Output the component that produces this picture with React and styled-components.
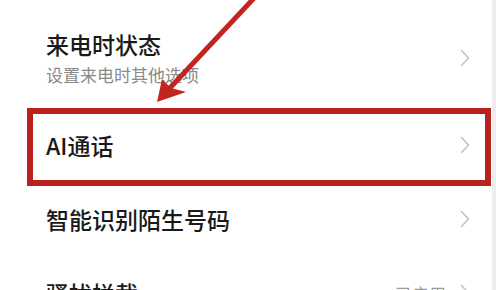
import React from 'react';
import styled, { createGlobalStyle } from 'styled-components';

const GlobalStyle = createGlobalStyle`
  html, body {
    margin: 0;
    padding: 0;
    background: #ffffff;
  }
  body {
    font-family: "Noto Sans CJK SC", "Noto Sans", sans-serif;
    -webkit-font-smoothing: antialiased;
  }
`;

const items = [
  { id: 'status', title: '来电时状态', desc: '设置来电时其他选项' },
  { id: 'ai', title: 'AI通话', highlight: true },
  { id: 'stranger', title: '智能识别陌生号码' },
  { id: 'block', title: '骚扰拦截', value: '已启用' },
];

const Chevron = () => (
  <svg width="10" height="18" viewBox="0 0 10 18" fill="none">
    <path d="M1.5 1.5 L8.5 9 L1.5 16.5" stroke="#c2c2c2" strokeWidth="1.6" strokeLinecap="round" strokeLinejoin="round" />
  </svg>
);

const App = () => {
  return (
    <>
      <GlobalStyle />
      <Screen>
        <List>
          {items.map(item => (
            <Row key={item.id} tall={!!item.desc} highlight={item.highlight}>
              <TextBlock>
                <Title>{item.title}</Title>
                {item.desc && <Desc>{item.desc}</Desc>}
              </TextBlock>
              <Trailing>
                {item.value && <Value>{item.value}</Value>}
                <Chevron />
              </Trailing>
            </Row>
          ))}
        </List>
        <ArrowOverlay width="496" height="290" viewBox="0 0 496 290">
          <line x1="256" y1="-4" x2="168" y2="90" stroke="#c22420" strokeWidth="5" strokeLinecap="round" />
          <polygon points="157,102 162,79 171,88 186,92" fill="#c22420" />
        </ArrowOverlay>
      </Screen>
    </>
  );
};

const Screen = styled.div`
  position: relative;
  width: 496px;
  height: 290px;
  overflow: hidden;
  background: #ffffff;
  padding-top: 7px;
  box-sizing: border-box;
  border-right: 4px solid #ededed;
`;

const List = styled.div`
  display: flex;
  flex-direction: column;
`;

const Row = styled.div`
  position: relative;
  display: flex;
  align-items: center;
  justify-content: space-between;
  height: ${p => (p.tall ? '101px' : '74px')};
  padding: 0 22px 0 46px;
  box-sizing: border-box;

  ${p => p.highlight && `
    &::after {
      content: '';
      position: absolute;
      left: 27px;
      right: 1px;
      top: 0;
      height: 78px;
      border: 6px solid #b8211d;
      box-sizing: border-box;
      pointer-events: none;
    }
  `}
`;

const TextBlock = styled.div`
  display: flex;
  flex-direction: column;
  gap: 6px;
`;

const Title = styled.div`
  font-size: 23px;
  font-weight: 500;
  line-height: 28px;
  color: #1a1a1a;
`;

const Desc = styled.div`
  font-size: 17px;
  line-height: 22px;
  color: #8a8a8a;
`;

const Trailing = styled.div`
  display: flex;
  align-items: center;
  gap: 14px;
`;

const Value = styled.span`
  font-size: 17px;
  color: #9a9a9a;
`;

const ArrowOverlay = styled.svg`
  position: absolute;
  left: 0;
  top: 0;
  pointer-events: none;
`;

export default App;
